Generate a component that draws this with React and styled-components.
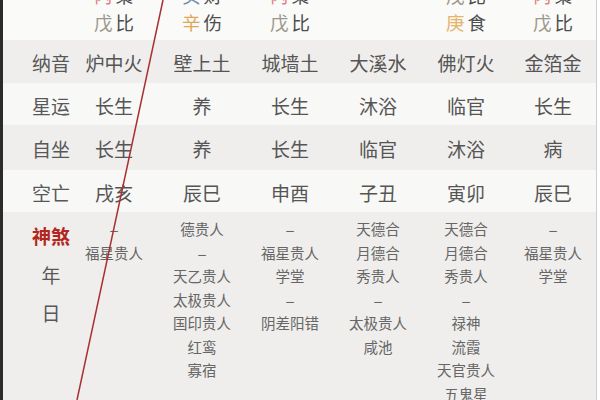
import React from 'react';
import styled, { createGlobalStyle } from 'styled-components';

const GlobalStyle = createGlobalStyle`
  html, body {
    margin: 0;
    padding: 0;
    background: #ffffff;
  }
  body {
    font-family: "Noto Sans CJK SC", "Noto Sans", sans-serif;
  }
`;

const Page = styled.div`
  position: relative;
  width: 600px;
  height: 400px;
  overflow: hidden;
  display: flex;
  background: #ffffff;
`;

const EdgeBar = styled.div`
  width: 3px;
  flex-shrink: 0;
  background: #2b2b2b;
`;

const Table = styled.div`
  width: 593px;
  height: 400px;
  flex-shrink: 0;
  border-right: 1px solid #cfcfcd;
  display: grid;
  grid-template-columns: 67px repeat(5, 88px) 86px;
  grid-template-rows: 40px 43px 42px 45px 42px 1fr;
  color: #555555;
`;

const HiddenCell = styled.div`
  background: #fafaf9;
  overflow: hidden;
  display: flex;
  flex-direction: column;
  align-items: center;
`;

const HiddenStack = styled.div`
  margin-top: -45.5px;
  display: flex;
  flex-direction: column;
  align-items: center;
`;

const HiddenLine = styled.div`
  height: 27px;
  line-height: 27px;
  font-size: 18.5px;
  display: flex;
  gap: 3px;
`;

const Stem = styled.span`
  color: ${(p) => p.$color};
`;

const God = styled.span`
  color: #4d4d4d;
`;

const Cell = styled.div`
  background: ${(p) => (p.$shade ? '#efeeec' : '#f8f8f6')};
  display: flex;
  align-items: center;
  justify-content: center;
  padding-top: 2px;
  box-sizing: border-box;
  font-size: 19px;
  line-height: 1;
  white-space: nowrap;
`;

const LabelCell = styled(Cell)`
  justify-content: flex-start;
  padding-left: 29px;
  color: #585858;
`;

const ShaLabels = styled.div`
  background: #efeeec;
  padding: 5px 0 0 29px;
  display: flex;
  flex-direction: column;
`;

const ShaLabel = styled.div`
  width: 38px;
  height: 38.5px;
  line-height: 38.5px;
  text-align: center;
  font-size: 19px;
  color: ${(p) => (p.$accent ? '#b3261e' : '#585858')};
  font-weight: ${(p) => (p.$accent ? 700 : 400)};
`;

const ShaCell = styled.div`
  background: #efeeec;
  padding-top: 5px;
  display: flex;
  flex-direction: column;
  align-items: center;
`;

const ShaItem = styled.div`
  height: 23.5px;
  line-height: 23.5px;
  font-size: ${(p) => (p.$dash ? '17px' : '14.5px')};
  color: #666666;
  white-space: nowrap;
`;

const Overlay = styled.svg`
  position: absolute;
  left: 0;
  top: 0;
  pointer-events: none;
`;

const stemColors = {
  甲: '#6fa56f',
  丙: '#e58080',
  戊: '#9d978b',
  己: '#9d978b',
  庚: '#e5b36c',
  辛: '#e3a655',
  癸: '#6f8cab',
};

const pillars = [
  {
    hidden: [['甲', '杀'], ['丙', '枭'], ['戊', '比']],
    nayin: '炉中火', xingyun: '长生', zizuo: '长生', kong: '戌亥',
    sha: ['–', '福星贵人'],
  },
  {
    hidden: [['己', '劫'], ['癸', '财'], ['辛', '伤']],
    nayin: '壁上土', xingyun: '养', zizuo: '养', kong: '辰巳',
    sha: ['德贵人', '–', '天乙贵人', '太极贵人', '国印贵人', '红鸾', '寡宿'],
  },
  {
    hidden: [['甲', '杀'], ['丙', '枭'], ['戊', '比']],
    nayin: '城墙土', xingyun: '长生', zizuo: '长生', kong: '申酉',
    sha: ['–', '福星贵人', '学堂', '–', '阴差阳错'],
  },
  {
    hidden: [['癸', '财']],
    nayin: '大溪水', xingyun: '沐浴', zizuo: '临官', kong: '子丑',
    sha: ['天德合', '月德合', '秀贵人', '–', '太极贵人', '咸池'],
  },
  {
    hidden: [['丙', '枭'], ['戊', '比'], ['庚', '食']],
    nayin: '佛灯火', xingyun: '临官', zizuo: '沐浴', kong: '寅卯',
    sha: ['天德合', '月德合', '秀贵人', '–', '禄神', '流霞', '天官贵人', '五鬼星'],
  },
  {
    hidden: [['甲', '杀'], ['丙', '枭'], ['戊', '比']],
    nayin: '金箔金', xingyun: '长生', zizuo: '病', kong: '辰巳',
    sha: ['–', '福星贵人', '学堂'],
  },
];

const rows = [
  { label: '纳音', key: 'nayin', shade: true },
  { label: '星运', key: 'xingyun', shade: false },
  { label: '自坐', key: 'zizuo', shade: true },
  { label: '空亡', key: 'kong', shade: false },
];

export default function App() {
  return (
    <>
      <GlobalStyle />
      <Page>
        <EdgeBar />
        <Table>
          <HiddenCell />
          {pillars.map((p, i) => (
            <HiddenCell key={`h${i}`}>
              <HiddenStack>
                {p.hidden.map(([stem, god], j) => (
                  <HiddenLine key={j}>
                    <Stem $color={stemColors[stem]}>{stem}</Stem>
                    <God>{god}</God>
                  </HiddenLine>
                ))}
              </HiddenStack>
            </HiddenCell>
          ))}

          {rows.map((row) => (
            <React.Fragment key={row.key}>
              <LabelCell $shade={row.shade}>{row.label}</LabelCell>
              {pillars.map((p, i) => (
                <Cell key={i} $shade={row.shade}>{p[row.key]}</Cell>
              ))}
            </React.Fragment>
          ))}

          <ShaLabels>
            <ShaLabel $accent>神煞</ShaLabel>
            <ShaLabel>年</ShaLabel>
            <ShaLabel>日</ShaLabel>
          </ShaLabels>
          {pillars.map((p, i) => (
            <ShaCell key={`s${i}`}>
              {p.sha.map((s, j) => (
                <ShaItem key={j} $dash={s === '–'}>{s}</ShaItem>
              ))}
            </ShaCell>
          ))}
        </Table>
        <Overlay width="600" height="400" viewBox="0 0 600 400">
          <line x1="163" y1="0" x2="77" y2="400" stroke="#a8302e" strokeWidth="1.5" />
        </Overlay>
      </Page>
    </>
  );
}
